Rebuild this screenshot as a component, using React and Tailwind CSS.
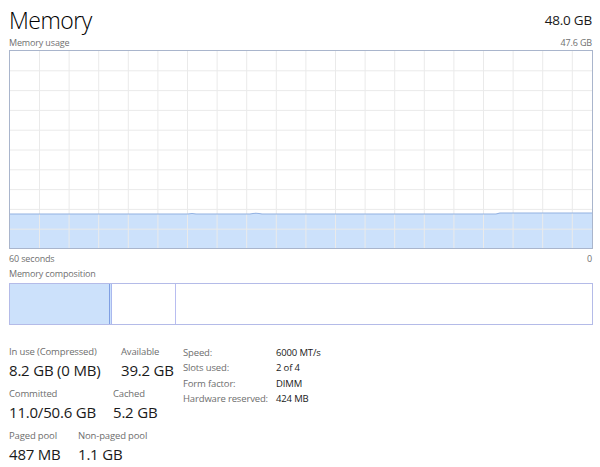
import React from "react"

const font = { fontFamily: '"Segoe UI", "Open Sans", "Noto Sans", sans-serif' }

function UsageGraph() {
  const w = 582
  const h = 197
  const vlines = []
  for (let x = 29.5; x < w; x += 29.6) vlines.push(x)
  const hlines = []
  for (let y = 19.8; y < h; y += 19.8) hlines.push(y)
  // fill top line, small bumps like the reference
  const top = "M0 163 L178 163 Q182 162 186 163 L240 163 Q246 161.5 252 163 L486 163 L490 162 L582 162"
  return (
    <svg width={w} height={h} className="block">
      <path d={top + ` L${w} ${h} L0 ${h} Z`} fill="#cce1fb" />
      {vlines.map((x, i) => (
        <line key={"v" + i} x1={x} y1="0" x2={x} y2={h} stroke="#eaeaea" strokeWidth="1" />
      ))}
      {hlines.map((y, i) => (
        <line key={"h" + i} x1="0" y1={y} x2={w} y2={y} stroke="#eaeaea" strokeWidth="1" />
      ))}
      <path d={top} fill="none" stroke="#92b1e2" strokeWidth="1.2" />
    </svg>
  )
}

function Stat({ label, value, className = "" }) {
  return (
    <div className={"flex flex-col " + className}>
      <span className="text-[9.5px] leading-[14px] tracking-[-0.15px] text-[#6e6e6e]">{label}</span>
      <span className="text-[15px] leading-[22px] tracking-[-0.2px] text-[#1a1a1a] whitespace-nowrap">{value}</span>
    </div>
  )
}

export default function App() {
  const info = [
    ["Speed:", "6000 MT/s"],
    ["Slots used:", "2 of 4"],
    ["Form factor:", "DIMM"],
    ["Hardware reserved:", "424 MB"],
  ]
  return (
    <div className="w-[600px] h-[467px] bg-white pl-[9px] pr-[8px] overflow-hidden" style={font}>
      <div className="flex items-end justify-between h-[36px]">
        <span className="text-[23px] leading-[32px] font-light text-black tracking-[-0.5px]">Memory</span>
        <span className="text-[13.5px] leading-[20px] tracking-[-0.2px] text-[#1a1a1a] mb-[6px]">48.0 GB</span>
      </div>
      <div className="flex justify-between h-[14px] text-[9px] leading-[14px] tracking-[-0.15px] text-[#707070]">
        <span>Memory usage</span>
        <span>47.6 GB</span>
      </div>
      <div className="border border-[#a9b5cc] w-[584px] h-[199px]">
        <UsageGraph />
      </div>
      <div className="flex justify-between h-[16px] mt-[2px] text-[9px] leading-[16px] tracking-[-0.15px] text-[#707070]">
        <span>60 seconds</span>
        <span>0</span>
      </div>
      <div className="h-[15px] text-[9px] leading-[14px] tracking-[-0.15px] text-[#707070]">Memory composition</div>
      <div className="flex w-[584px] h-[42px] mt-[1px] border border-[#b4bbe8]">
        <div className="w-[100px] bg-[#cce1fb] border-r border-[#7f9fe3]" />
        <div className="w-[2px] bg-[#cce1fb] border-r border-[#aab8ee]" />
        <div className="w-[64px] border-r border-[#b8bdf0]" />
        <div className="flex-1" />
      </div>
      <div className="flex mt-[20px]">
        <div className="flex flex-col gap-[6px] w-[174px]">
          <div className="flex">
            <Stat label="In use (Compressed)" value="8.2 GB (0 MB)" className="w-[112px]" />
            <Stat label="Available" value="39.2 GB" />
          </div>
          <div className="flex">
            <Stat label="Committed" value="11.0/50.6 GB" className="w-[104px]" />
            <Stat label="Cached" value="5.2 GB" />
          </div>
          <div className="flex">
            <Stat label="Paged pool" value="487 MB" className="w-[69px]" />
            <Stat label="Non-paged pool" value="1.1 GB" />
          </div>
        </div>
        <div className="flex flex-col">
          {info.map(([k, v]) => (
            <div key={k} className="flex text-[9.5px] leading-[15.4px] tracking-[-0.15px]">
              <span className="w-[93px] text-[#6e6e6e]">{k}</span>
              <span className="text-[#1a1a1a]">{v}</span>
            </div>
          ))}
        </div>
      </div>
    </div>
  )
}
